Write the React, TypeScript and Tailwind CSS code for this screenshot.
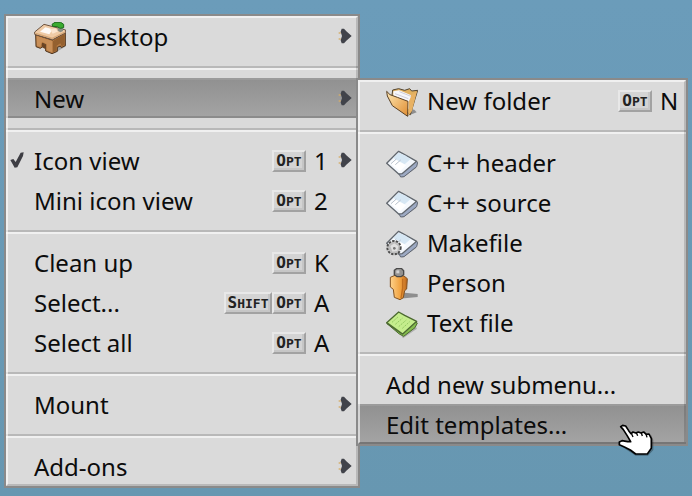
import type { ReactNode } from "react";

function DesktopIcon() {
  return (
    <svg aria-hidden="true" className="mt-1 size-8 shrink-0" viewBox="0 0 96 96">
      <path d="M58 95l38-22v-8l-20-4z" fill="#000" opacity=".25" />
      <path d="M5 38l1 36 13 5 6-4V64l10 4v19l19 8 16-7V76l9-4 3 5 12-6V32L55 54z" fill="#b67a42" stroke="#4f3620" strokeWidth="3" strokeLinejoin="round" />
      <path d="M8 42l46 15v34l-16-7V66l-14-7-5 16-10-4z" fill="#c88f58" />
      <path d="M57 57l35-22v33l-9 5-4-9-11 7v15l-11 5z" fill="#94602f" />
      <path d="M24 64l11 4v14l-11-6z" fill="#6b4422" />
      <path d="M2 30L30 7l65 17v8L56 53 2 37z" fill="#efcba6" stroke="#6c5340" strokeWidth="3" strokeLinejoin="round" />
      <path d="M5 34l50 15 38-19" fill="none" stroke="#d8a877" strokeWidth="4" />
      <path d="M18 29l16-13 22 6-10 15z" fill="#fff" opacity=".9" />
      <path d="M48 22l16-3 9 9-17 7z" fill="#fbe5cf" />
      <path d="M71 17h16v10l-8 4-8-5z" fill="#8a8f86" />
      <path d="M54 7l9-6h17l9 6v10l-10 2-10-5-13-1z" fill="#3aab30" stroke="#1d6b1c" strokeWidth="3" />
    </svg>
  );
}

function FolderIcon() {
  return (
    <svg aria-hidden="true" className="mt-1 size-8 shrink-0" viewBox="0 0 96 96">
      <defs>
        <linearGradient id="folder" x1="0" y1="0" x2="1" y2="1">
          <stop offset="0" stopColor="#ffe9b4" />
          <stop offset="1" stopColor="#df8c31" />
        </linearGradient>
      </defs>
      <path d="M64 90l28-11-7-8-12-2z" fill="#000" opacity=".35" />
      <path d="M20 12l18-4 18 5 15-5 6 7 18-2-8 26-14 47-57-41z" fill="#e0b060" stroke="#51432f" strokeWidth="3" />
      <path d="M22 16l18-3 34 14 4 10-8 34-48-42z" fill="#f7f7fb" />
      <path d="M27 23l40 15M40 17l35 14" fill="none" stroke="#cfceda" strokeWidth="3" />
      <path d="M2 16l10 10 22 8 32 12-1 45-46-32L4 30z" fill="url(#folder)" stroke="#5a4125" strokeWidth="3" strokeLinejoin="round" />
      <path d="M68 47l9-20 16-11-15 59-11 14z" fill="#e8b264" />
    </svg>
  );
}

function SheetIcon({ gear = false }: { gear?: boolean }) {
  return (
    <svg aria-hidden="true" className="mt-1 size-8 shrink-0" viewBox="0 0 96 96">
      <path d="M50 89l40-28-3-6-40 28z" fill="#000" opacity=".18" />
      <path d="M38 76l6 11 10-1 38-30 3-13-8-5z" fill="#9daac4" stroke="#5e6571" strokeWidth="3" strokeLinejoin="round" />
      <path d="M2 46L38 10l18 10 36 20-44 37-10 1z" fill="#f4f8fd" stroke="#62686f" strokeWidth="4" strokeLinejoin="round" />
      <path d="M22 30l16-16 18 8 18 11-18 16z" fill="#d6e7f4" />
      <path d="M12 45l12-12 36 19-18 18z" fill="#fff" />
      <path d="M15 47l16-14M28 50l16-14" stroke="#b7c1cc" strokeWidth="3" />
      {gear && (
        <g>
          <circle cx="24" cy="59" r="20" fill="#c9c9c9" stroke="#4c4c4c" strokeWidth="6" strokeDasharray="7 4" />
          <circle cx="24" cy="59" r="16" fill="#bdbdbd" />
          <path d="M13 54l12-8 12 9-3 14-15 2z" fill="#eee" opacity=".7" />
          <circle cx="25" cy="61" r="4" fill="#777" />
        </g>
      )}
    </svg>
  );
}

function PersonIcon() {
  return (
    <svg aria-hidden="true" className="mt-1 size-8 shrink-0" viewBox="0 0 96 96">
      <defs>
        <linearGradient id="person">
          <stop offset="0" stopColor="#ffd28a" />
          <stop offset=".6" stopColor="#f0a13f" />
          <stop offset="1" stopColor="#b9631a" />
        </linearGradient>
      </defs>
      <path d="M40 92l55-5v-9l-39-4z" fill="#000" opacity=".35" />
      <path d="M13 28l14-6 27 2 10 8-2 31-6 5-4 21-10 6-17-7-3-24-9-7z" fill="url(#person)" stroke="#82511f" strokeWidth="3" />
      <path d="M50 32v28l-5 30" fill="none" stroke="#c16e1e" strokeWidth="4" />
      <path d="M25 7l8-6h13l7 7v12l-8 6H33l-8-6z" fill="#92918f" stroke="#494949" strokeWidth="4" />
      <path d="M31 7h9v9h-9z" fill="#d2d2d2" />
    </svg>
  );
}

function TextFileIcon() {
  return (
    <svg aria-hidden="true" className="mt-1 size-8 shrink-0" viewBox="0 0 96 96">
      <path d="M51 91l42-29-3-5-43 28z" fill="#000" opacity=".2" />
      <path d="M2 46l46 32 39-38 7 5-7 14-34 26-13-7z" fill="#86bd4f" stroke="#4b6a2f" strokeWidth="3" strokeLinejoin="round" />
      <path d="M2 44l36-32 18 10 36 18-42 38z" fill="#c5ed8d" stroke="#4c6a31" strokeWidth="4" strokeLinejoin="round" />
      <path d="M18 43l20-18M28 49l22-19M38 56l23-20M49 61l22-20" stroke="#94c962" strokeWidth="3" strokeDasharray="6 3" />
    </svg>
  );
}

function Check() {
  return (
    <svg aria-hidden="true" className="h-4 w-3.5" viewBox="0 0 42 48">
      <path d="M1 24l9-3 7 9L32 2l9-1-2 11-17 34-8 1z" fill="#3d3d43" />
    </svg>
  );
}

function Arrow() {
  return (
    <svg aria-hidden="true" className="h-4 w-3.5 shrink-0" viewBox="0 0 42 48">
      <path d="M2 12h6v6H2zM2 30h6v6H2z" fill="#d5ad68" opacity=".7" />
      <path d="M11 2h7l7 8 16 14-16 14-7 8h-7l-3-9 4-13-4-13z" fill="#41434a" />
    </svg>
  );
}

function HandCursor() {
  return (
    <svg aria-hidden="true" className="pointer-events-none absolute top-[18px] right-8 z-20 h-[34px] w-9 overflow-visible" viewBox="174 160 108 102">
      <path d="M193 233l34 22h37l16-17v-30l-8-18 5 45-15 18z" fill="#000" opacity=".3" />
      <path
        d="M182 168l6-4 9 2 9 14 7 9 6-5 8 3 8-3 8 3 8-3 8 7 8-1 7 14v29l-12 17h-35l-16-12-18-9-15-7v-8l8-4 17 3h9l-11-19-11-17z"
        fill="#fff"
        stroke="#000"
        strokeWidth="5"
        strokeLinejoin="round"
      />
      <path d="M214 188l5 11M229 186l4 9M244 187l3 9M258 190l3 10" stroke="#000" strokeWidth="4" />
    </svg>
  );
}

function KeyCap({ children }: { children: string }) {
  return (
    <kbd
      className={`mt-0.5 block h-[22px] shrink-0 border-2 border-t-[#e8e8e8] border-r-[#a2a2a2] border-b-[#a2a2a2] border-l-[#e8e8e8] bg-[#d4d4d4] text-center font-['DejaVu_Sans_Mono',monospace] text-[13px] leading-[18px] font-bold text-[#222] shadow-[inset_-2px_-2px_0_#c6c6c6] first-letter:text-[16px] ${children === "SHIFT" ? "w-12" : "w-[34px]"}`}
    >
      {children}
    </kbd>
  );
}

type ItemProps = {
  label: string;
  icon?: ReactNode;
  keys?: string[];
  letter?: string;
  arrowSlot?: boolean;
  submenu?: boolean;
  checked?: boolean;
  selected?: boolean;
  children?: ReactNode;
};

function Item({ label, icon, keys = [], letter, arrowSlot = true, submenu, checked, selected, children }: ItemProps) {
  return (
    <button
      type="button"
      role={checked ? "menuitemradio" : "menuitem"}
      aria-checked={checked}
      aria-haspopup={submenu ? "menu" : undefined}
      className={`relative flex h-10 w-full items-center text-left whitespace-nowrap ${
        selected
          ? "border-y-2 border-t-[#9b9b9b] border-b-[#8b8b8b] bg-linear-to-b from-[#919191] to-[#a3a3a3]"
          : ""
      }`}
    >
      <span className="w-7 shrink-0 pl-1">{checked && <Check />}</span>
      {icon}
      <span className={icon ? "flex-1 pt-0.5 pl-[9px]" : "flex-1 pt-0.5"}>{label}</span>
      {keys.map((key) => (
        <KeyCap key={key}>{key}</KeyCap>
      ))}
      {letter && <span className="w-8 shrink-0 pt-0.5 pl-2">{letter}</span>}
      <span className={arrowSlot ? "w-5 shrink-0" : "w-0.5 shrink-0"}>{submenu && <Arrow />}</span>
      {children}
    </button>
  );
}

function Separator() {
  return <div role="separator" className="my-2.5 h-0.5 bg-[#b8b8b8] shadow-[0_2px_0_#f0f0f0]" />;
}

function Group({ children }: { children: ReactNode }) {
  return <div role="group">{children}</div>;
}

const menuClass =
  "relative border-2 border-[#8a8a8a] bg-[#dadada] after:pointer-events-none after:absolute after:inset-0 after:border-2 after:border-t-white/60 after:border-r-black/15 after:border-b-black/15 after:border-l-white/60";

export default function App() {
  return (
    <main className="flex min-h-screen items-start bg-[#6899b5] bg-linear-to-b from-[#6b9cba] to-[#6797b1] px-1 pt-3.5 font-['Noto_Sans',sans-serif] text-[24px] leading-8 text-[#0c0c0c]">
      <div role="menu" aria-label="Desktop" className={`${menuClass} w-[356px] shrink-0`}>
        <Item label="Desktop" icon={<DesktopIcon />} submenu />
        <Separator />
        <Item label="New" submenu selected />
        <Separator />
        <Group>
          <Item label="Icon view" keys={["OPT"]} letter="1" submenu checked />
          <Item label="Mini icon view" keys={["OPT"]} letter="2" />
        </Group>
        <Separator />
        <Group>
          <Item label="Clean up" keys={["OPT"]} letter="K" />
          <Item label="Select..." keys={["SHIFT", "OPT"]} letter="A" />
          <Item label="Select all" keys={["OPT"]} letter="A" />
        </Group>
        <Separator />
        <Item label="Mount" submenu />
        <Separator />
        <Item label="Add-ons" submenu />
      </div>
      <div role="menu" aria-label="New" className={`${menuClass} z-10 mt-16 -ml-1 flex-1`}>
        <Item label="New folder" icon={<FolderIcon />} keys={["OPT"]} letter="N" arrowSlot={false} />
        <Separator />
        <Group>
          <Item label="C++ header" icon={<SheetIcon />} />
          <Item label="C++ source" icon={<SheetIcon />} />
          <Item label="Makefile" icon={<SheetIcon gear />} />
          <Item label="Person" icon={<PersonIcon />} />
          <Item label="Text file" icon={<TextFileIcon />} />
        </Group>
        <Separator />
        <Item label="Add new submenu..." />
        <Item label="Edit templates..." selected>
          <HandCursor />
        </Item>
      </div>
    </main>
  );
}
